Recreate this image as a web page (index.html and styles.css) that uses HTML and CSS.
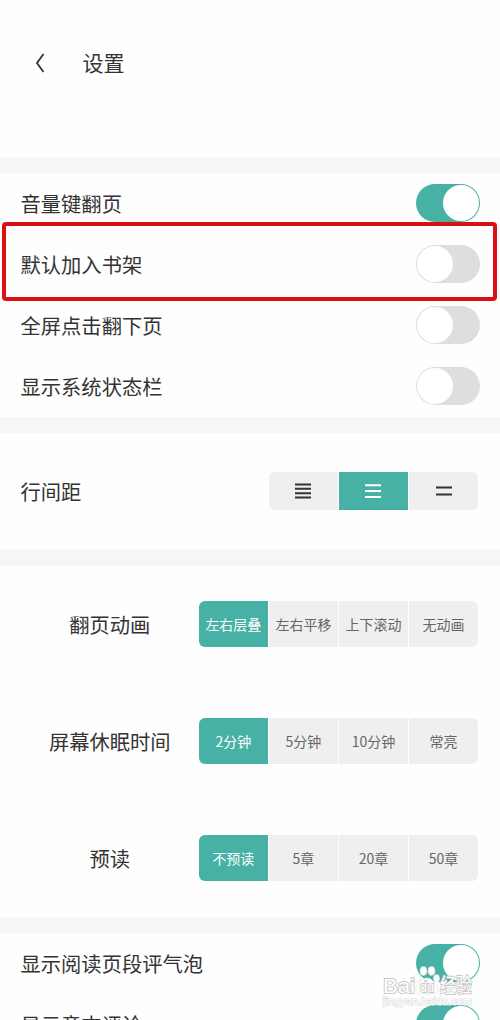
FILE: index.html
```html
<!DOCTYPE html>
<html lang="zh-CN">
<head>
    <meta charset="UTF-8">
    <meta name="viewport" content="width=device-width, initial-scale=1.0">
    <title>设置</title>
    <link rel="stylesheet" href="styles.css">
</head>
<body>
    <header class="header">
        <svg class="back" width="10" height="20" viewBox="0 0 10 20">
            <path d="M8.5 1 L2 10 L8.5 19" fill="none" stroke="#333" stroke-width="1.8"/>
        </svg>
        <h1>设置</h1>
    </header>

    <section class="section">
        <div class="row"><span>音量键翻页</span><div class="toggle on"></div></div>
        <div class="row marked"><span>默认加入书架</span><div class="toggle"></div></div>
        <div class="row"><span>全屏点击翻下页</span><div class="toggle"></div></div>
        <div class="row"><span>显示系统状态栏</span><div class="toggle"></div></div>
    </section>

    <section class="section">
        <div class="row tall">
            <span>行间距</span>
            <div class="segments spacing">
                <div class="segment">
                    <svg width="16" height="16" viewBox="0 0 16 16"><path d="M0 1.4H16M0 5.8H16M0 10.2H16M0 14.6H16"/></svg>
                </div>
                <div class="segment active">
                    <svg width="16" height="16" viewBox="0 0 16 16"><path d="M0 2.3H16M0 8.1H16M0 13.9H16"/></svg>
                </div>
                <div class="segment">
                    <svg width="16" height="16" viewBox="0 0 16 16"><path d="M0 4.5H16M0 11.5H16"/></svg>
                </div>
            </div>
        </div>
    </section>

    <section class="section">
        <div class="row tall">
            <span class="label">翻页动画</span>
            <div class="segments">
                <div class="segment active">左右层叠</div>
                <div class="segment">左右平移</div>
                <div class="segment">上下滚动</div>
                <div class="segment">无动画</div>
            </div>
        </div>
        <div class="row tall">
            <span class="label">屏幕休眠时间</span>
            <div class="segments">
                <div class="segment active">2分钟</div>
                <div class="segment">5分钟</div>
                <div class="segment">10分钟</div>
                <div class="segment">常亮</div>
            </div>
        </div>
        <div class="row tall">
            <span class="label">预读</span>
            <div class="segments">
                <div class="segment active">不预读</div>
                <div class="segment">5章</div>
                <div class="segment">20章</div>
                <div class="segment">50章</div>
            </div>
        </div>
    </section>

    <section class="section">
        <div class="row"><span>显示阅读页段评气泡</span><div class="toggle on"></div></div>
        <div class="row"><span>显示章末评论</span><div class="toggle on"></div></div>
    </section>

    <svg class="watermark" width="120" height="50" viewBox="0 0 120 50">
        <g class="paw">
            <ellipse cx="43.5" cy="11" rx="3.4" ry="4.4"/>
            <ellipse cx="51.5" cy="11" rx="3.4" ry="4.4"/>
            <ellipse cx="37.5" cy="18" rx="3" ry="4"/>
            <ellipse cx="56.5" cy="18.5" rx="3" ry="4"/>
            <path d="M47 18 C52 18 53 22 57 26 C60 30 57 34.5 52 34 H42 C37 34.5 34 30 37 26 C41 22 42 18 47 18Z"/>
        </g>
        <text class="brand" x="3" y="33" textLength="32" lengthAdjust="spacingAndGlyphs">Bai</text>
        <text class="brand du" x="40" y="32" textLength="14" lengthAdjust="spacingAndGlyphs">du</text>
        <text class="brand" x="60" y="33" textLength="32" lengthAdjust="spacingAndGlyphs">经验</text>
        <text class="site" x="3" y="45" textLength="89">jingyan.baidu.com</text>
    </svg>
</body>
</html>
```
FILE: styles.css
```css
* {
    box-sizing: border-box;
}
body {
    margin: 0;
    height: 1020px;
    overflow: hidden;
    position: relative;
    background-color: #fefefe;
    color: #333;
    font-family: "Noto Sans CJK SC", sans-serif;
    font-size: 20.3px;
}
.header {
    display: flex;
    align-items: center;
    height: 157px;
    padding: 0 0 32px 35px;
}
.back {
    margin-right: 37.5px;
}
h1 {
    margin: 0;
    font-size: 21px;
    font-weight: normal;
    line-height: 31px;
}
.section {
    border-top: 16px solid #f6f6f6;
}
.row {
    display: flex;
    align-items: center;
    justify-content: space-between;
    position: relative;
    height: 61px;
    padding: 0 20.5px 2px;
    line-height: 30px;
}
.row.tall {
    height: 117px;
    padding-right: 22px;
}
.label {
    flex: 1;
    text-align: center;
}
/* Red frame around the highlighted setting */
.marked::after {
    content: "";
    box-sizing: border-box;
    position: absolute;
    left: 2px;
    top: -12px;
    width: 495px;
    height: 79px;
    border: 4px solid #db0f14;
    border-radius: 4px;
}
.toggle {
    display: flex;
    width: 64px;
    height: 38px;
    padding: 1px;
    border-radius: 19px;
    background-color: #dedede;
}
.toggle::before {
    content: "";
    width: 36px;
    height: 36px;
    border-radius: 50%;
    background-color: #fff;
}
.toggle.on {
    justify-content: flex-end;
    background-color: #47b1a6;
}
.segments {
    display: grid;
    grid-template-columns: repeat(4, 1fr);
    gap: 1.3px;
    width: 279px;
    height: 46px;
    border-radius: 6px;
    overflow: hidden;
    font-size: 14px;
    color: #666;
}
.segments.spacing {
    grid-template-columns: repeat(3, 1fr);
    width: 209px;
    height: 38px;
}
.segment {
    display: flex;
    align-items: center;
    justify-content: center;
    background-color: #efefef;
}
.segment.active {
    background-color: #47b1a6;
    color: #fff;
}
.segment path {
    stroke: #333;
    stroke-width: 2;
}
.segment.active path {
    stroke: #fff;
}
.watermark {
    position: absolute;
    left: 380px;
    top: 960px;
}
.paw {
    fill: #fff;
    stroke: #ddd;
    stroke-width: 0.6;
}
.brand {
    fill: #fff;
    stroke: #c8c8c8;
    stroke-width: 1.8;
    paint-order: stroke;
    font-family: "Liberation Sans", "Noto Sans CJK SC", sans-serif;
    font-size: 20px;
}
.brand.du {
    font-size: 14px;
}
.site {
    fill: #fff;
    stroke: #dcdcdc;
    stroke-width: 1.2;
    paint-order: stroke;
    font-family: "Liberation Sans", sans-serif;
    font-size: 11px;
}
```
